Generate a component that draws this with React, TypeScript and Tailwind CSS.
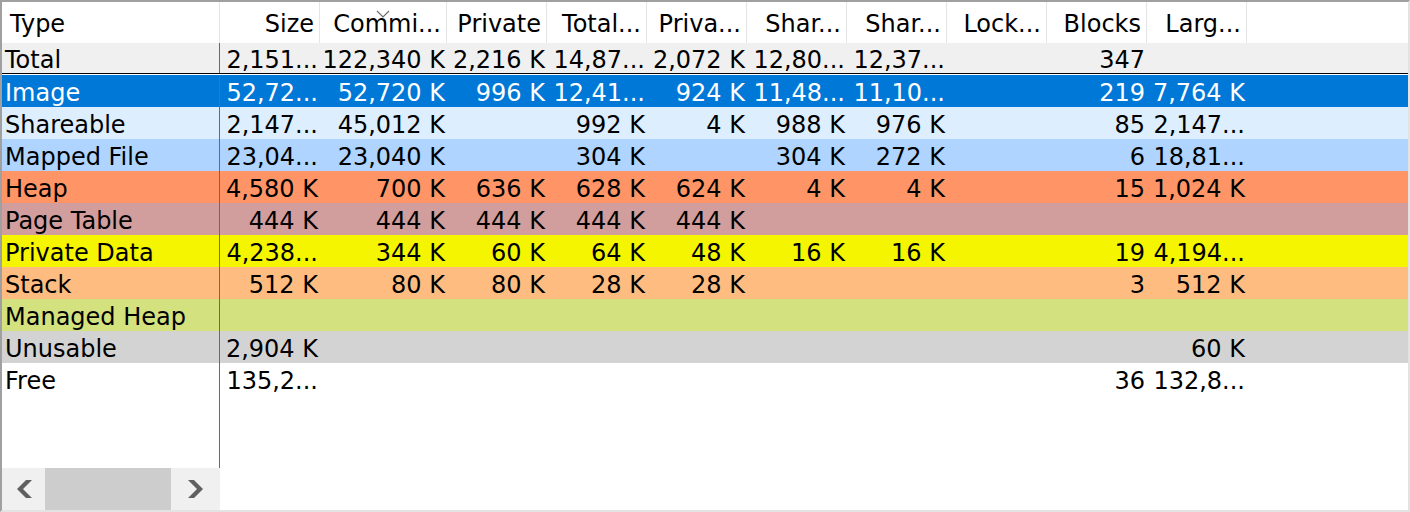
import React from "react";

// column widths of the scrolling pane (the Type column is frozen on the left)
const colWidths = [
  "w-[100px]",
  "w-[127px]",
  "w-[100px]",
  "w-[100px]",
  "w-[100px]",
  "w-[100px]",
  "w-[100px]",
  "w-[100px]",
  "w-[100px]",
  "w-[100px]",
];

const headers = [
  "Size",
  "Commi...",
  "Private",
  "Total...",
  "Priva...",
  "Shar...",
  "Shar...",
  "Lock...",
  "Blocks",
  "Larg...",
];

interface Row {
  type: string;
  bg: string;
  text?: string;
  cells: string[];
}

const rows: Row[] = [
  {
    type: "Image",
    bg: "bg-[#0078d7]",
    text: "text-white",
    cells: ["52,72...", "52,720 K", "996 K", "12,41...", "924 K", "11,48...", "11,10...", "", "219", "7,764 K"],
  },
  {
    type: "Shareable",
    bg: "bg-[#ddeeff]",
    cells: ["2,147...", "45,012 K", "", "992 K", "4 K", "988 K", "976 K", "", "85", "2,147..."],
  },
  {
    type: "Mapped File",
    bg: "bg-[#afd4ff]",
    cells: ["23,04...", "23,040 K", "", "304 K", "", "304 K", "272 K", "", "6", "18,81..."],
  },
  {
    type: "Heap",
    bg: "bg-[#ff9466]",
    cells: ["4,580 K", "700 K", "636 K", "628 K", "624 K", "4 K", "4 K", "", "15", "1,024 K"],
  },
  {
    type: "Page Table",
    bg: "bg-[#d19d9d]",
    cells: ["444 K", "444 K", "444 K", "444 K", "444 K", "", "", "", "", ""],
  },
  {
    type: "Private Data",
    bg: "bg-[#f5f500]",
    cells: ["4,238...", "344 K", "60 K", "64 K", "48 K", "16 K", "16 K", "", "19", "4,194..."],
  },
  {
    type: "Stack",
    bg: "bg-[#ffbc80]",
    cells: ["512 K", "80 K", "80 K", "28 K", "28 K", "", "", "", "3", "512 K"],
  },
  {
    type: "Managed Heap",
    bg: "bg-[#d3e17f]",
    cells: ["", "", "", "", "", "", "", "", "", ""],
  },
  {
    type: "Unusable",
    bg: "bg-[#d3d3d3]",
    cells: ["2,904 K", "", "", "", "", "", "", "", "", "60 K"],
  },
  {
    type: "Free",
    bg: "bg-white",
    cells: ["135,2...", "", "", "", "", "", "", "", "36", "132,8..."],
  },
];

const totals = ["2,151...", "122,340 K", "2,216 K", "14,87...", "2,072 K", "12,80...", "12,37...", "", "347", ""];

const DataCells: React.FC<{ cells: string[] }> = ({ cells }) => (
  <>
    {cells.map((c, i) => (
      <div
        key={i}
        className={`${colWidths[i]} shrink-0 whitespace-nowrap pr-[2px] text-right`}
      >
        {c}
      </div>
    ))}
  </>
);

const App: React.FC = () => {
  return (
    <div className="flex h-[512px] w-[1410px] flex-col overflow-hidden border-t-2 border-l-2 border-r-2 border-b-2 border-t-[#a0a0a0] border-l-[#a0a0a0] border-r-[#e3e3e3] border-b-[#e3e3e3] bg-white font-['DejaVu_Sans',sans-serif] text-[24px] leading-[28px] text-black">
      {/* header */}
      <div className="flex h-[41px] shrink-0 bg-white">
        <div className="flex w-[218px] shrink-0 items-center border-r border-[#e5e5e5] pl-[8px] pt-[3px]">
          Type
        </div>
        {headers.map((h, i) => (
          <div
            key={i}
            className={`${colWidths[i]} relative flex shrink-0 items-center justify-end whitespace-nowrap border-r border-[#e5e5e5] pr-[5px] pt-[3px]`}
          >
            {i === 1 && (
              <svg
                className="absolute left-[56px] top-[8px]"
                width="14"
                height="8"
                viewBox="0 0 14 8"
              >
                <path d="M1 1 L7 7 L13 1" fill="none" stroke="#6e6e6e" strokeWidth="1.2" />
              </svg>
            )}
            {h}
          </div>
        ))}
        <div className="flex-1" />
      </div>

      {/* total row */}
      <div className="flex h-[30px] shrink-0 items-center bg-[#f0f0f0] pt-[3px]">
        <div className="flex w-[218px] shrink-0 items-center self-stretch border-r border-[#6a6a6a] pl-[3px] -mt-[3px] pt-[3px]">
          Total
        </div>
        <DataCells cells={totals} />
      </div>
      <div className="h-px shrink-0 bg-black" />
      <div className="h-px shrink-0 bg-white" />

      {/* region rows */}
      {rows.map((r) => (
        <div
          key={r.type}
          className={`flex h-[32px] shrink-0 items-center pt-[4px] ${r.bg} ${r.text ?? ""}`}
        >
          <div className="flex w-[218px] shrink-0 items-center self-stretch whitespace-nowrap border-r border-[#6a6a6a] pl-[3px] -mt-[4px] pt-[4px]">
            {r.type}
          </div>
          <DataCells cells={r.cells} />
        </div>
      ))}

      {/* empty area + horizontal scrollbar of the frozen pane */}
      <div className="flex flex-1">
        <div className="flex w-[218px] shrink-0 flex-col">
          <div className="flex-1 border-r border-[#6a6a6a]" />
          <div className="flex h-[42px] shrink-0 bg-[#f0f0f0]">
            <div className="flex w-[43px] items-center justify-center">
              <svg width="18" height="18" viewBox="0 0 18 18">
                <polygon points="11,0 17,0 8,9 17,18 11,18 2,9" fill="#606060" />
              </svg>
            </div>
            <div className="w-[126px] bg-[#cdcdcd]" />
            <div className="flex flex-1 items-center justify-center">
              <svg width="18" height="18" viewBox="0 0 18 18">
                <polygon points="1,0 7,0 16,9 7,18 1,18 10,9" fill="#606060" />
              </svg>
            </div>
          </div>
        </div>
        <div className="flex-1" />
      </div>
    </div>
  );
};

export default App;
